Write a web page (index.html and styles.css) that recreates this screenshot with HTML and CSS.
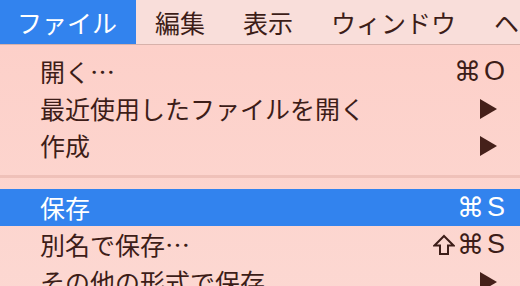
FILE: index.html
```html
<!DOCTYPE html>
<html lang="ja">
<head>
<meta charset="utf-8">
<link rel="stylesheet" href="styles.css">
</head>
<body>
<div class="screen">
  <div class="menubar">
    <div class="mb-item active">ファイル</div>
    <div class="mb-item">編集</div>
    <div class="mb-item">表示</div>
    <div class="mb-item">ウィンドウ</div>
    <div class="mb-item">ヘルプ</div>
  </div>
  <div class="menu">
    <div class="row"><span class="label">開く…</span><span class="key"><span class="cmd">⌘</span>O</span></div>
    <div class="row"><span class="label">最近使用したファイルを開く</span><span class="arrow"></span></div>
    <div class="row"><span class="label">作成</span><span class="arrow"></span></div>
    <div class="sep"></div>
    <div class="row selected"><span class="label">保存</span><span class="key"><span class="cmd">⌘</span>S</span></div>
    <div class="row"><span class="label">別名で保存…</span><span class="key"><svg class="shift" width="22" height="22" viewBox="0 0 22 22"><path d="M11 2 L20.5 11.5 L15 11.5 L15 20 L7 20 L7 11.5 L1.5 11.5 Z" fill="none" stroke="currentColor" stroke-width="2" stroke-linejoin="miter"/></svg><span class="cmd">⌘</span>S</span></div>
    <div class="row"><span class="label">その他の形式で保存</span><span class="arrow"></span></div>
  </div>
</div>
</body>
</html>
```
FILE: styles.css
```css
html, body {
  margin: 0;
  padding: 0;
}
body {
  width: 520px;
  height: 286px;
  overflow: hidden;
  background: #fdd2cb;
  font-family: "Noto Sans CJK JP", "DejaVu Sans", sans-serif;
  color: #3d1d18;
}
.screen {
  width: 520px;
  height: 286px;
  overflow: hidden;
}
.menubar {
  display: flex;
  height: 44px;
  background: #f9deda;
  border-bottom: 1px solid #d7b1aa;
  white-space: nowrap;
  overflow: hidden;
}
.mb-item {
  display: flex;
  align-items: center;
  padding: 0 19px;
  font-size: 25px;
  line-height: 1;
  flex: none;
}
.mb-item.active {
  padding-left: 17px;
  background: #3283ee;
  color: #ffffff;
}
.menu {
  display: flex;
  flex-direction: column;
  padding-top: 8px;
  background: linear-gradient(#fdd0c9, #fcd8d2);
}
.row {
  display: flex;
  align-items: center;
  justify-content: space-between;
  height: 37px;
  padding: 0 15px 0 40px;
  font-size: 25px;
  line-height: 1;
  white-space: nowrap;
}
.row.selected {
  background: #3283ee;
  color: #ffffff;
}
.key {
  display: flex;
  align-items: center;
  font-family: "Liberation Sans", "DejaVu Sans", sans-serif;
  font-size: 27px;
}
.cmd {
  font-family: "DejaVu Sans", sans-serif;
  font-size: 27px;
  margin-right: 3px;
}
.shift {
  display: block;
  margin-right: 2px;
}
.arrow {
  width: 0;
  height: 0;
  margin-right: 8px;
  border-left: 17px solid #45201a;
  border-top: 10px solid transparent;
  border-bottom: 10px solid transparent;
}
.sep {
  height: 3px;
  margin: 11px 0 11px;
  background: #efc1b9;
}
```
